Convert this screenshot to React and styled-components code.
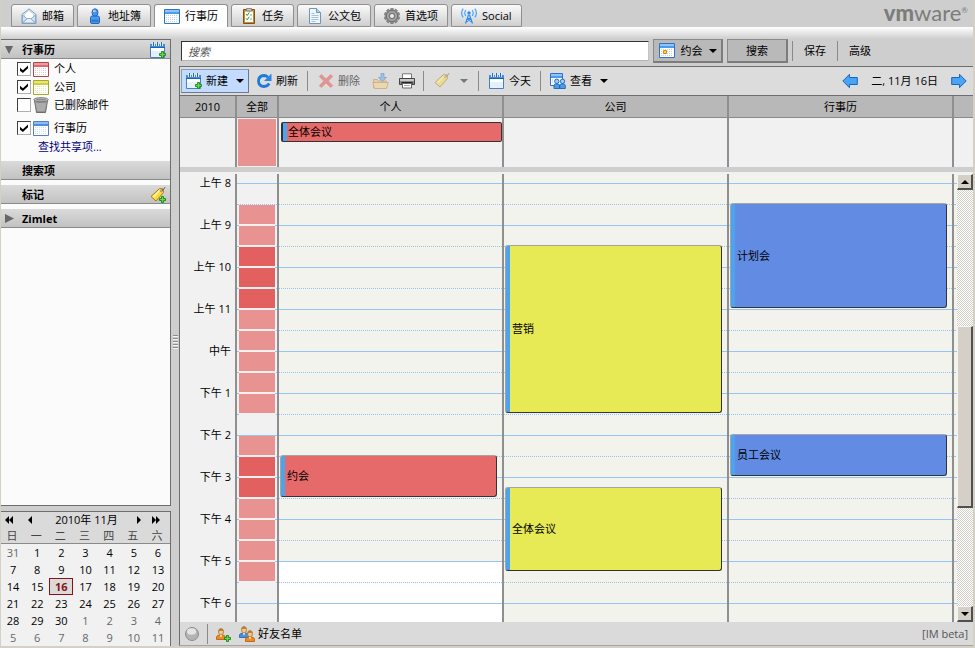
import React from "react";
import styled, { createGlobalStyle, css } from "styled-components";

const GlobalStyle = createGlobalStyle`
  *, *::before, *::after { box-sizing: border-box; }
  body {
    margin: 0;
    background: #cecece;
    color: #000;
    font-family: "Open Sans", "Noto Sans CJK SC", sans-serif;
    font-size: 11px;
    line-height: 16px;
  }
  button, input { font: inherit; color: inherit; }
`;

/* ---------- icons ---------- */

const Svg = styled.svg`
  display: block;
  flex: none;
  width: ${(p) => p.$w || 16}px;
  height: ${(p) => p.$h || 16}px;
  opacity: ${(p) => (p.$faded ? 0.5 : 1)};
`;

function Icon({ w = 16, h = 16, faded, children }) {
  return (
    <Svg $w={w} $h={h} $faded={faded} viewBox={`0 0 ${w} ${h}`} aria-hidden="true">
      {children}
    </Svg>
  );
}

const MailIcon = () => (
  <Icon>
    <path d="M1 6.500 8 .8l7 5.700v9H1z" fill="#dbe9f6" stroke="#7f9fc0" />
    <path d="M3.500 6 8 2.500 12.500 6v4.500h-9z" fill="#fff" stroke="#b4cbe0" strokeWidth=".7" />
    <path d="m1.500 7 4.700 4L1.500 15zM14.500 7l-4.700 4 4.700 4z" fill="#cfe2f4" stroke="#7f9fc0" strokeWidth=".8" />
    <path d="m1.500 15 5-4.500h3l5 4.500z" fill="#e3effa" stroke="#7f9fc0" strokeWidth=".8" />
  </Icon>
);

const PersonIcon = () => (
  <Icon>
    <path d="M3.500 9.500Q3.500 8 5.500 8h5q2 0 2 1.500V14q0 1.500-1.500 1.500H5q-1.500 0-1.500-1.500z" fill="#4b9bea" stroke="#1f67c0" />
    <path d="M4.500 11.500h7V14h-7z" fill="#2d7bd8" />
    <ellipse cx="8" cy="4.500" rx="3" ry="3.700" fill="#4596e8" stroke="#1f67c0" />
    <ellipse cx="7.300" cy="3" rx="1.500" ry="1.300" fill="#a2cdf8" />
  </Icon>
);

function GridCalendarIcon({ dark = "#2e72c4", head = "#4d9bee", light = "#8dc4fa", dot = "#c2cfe6", mark }) {
  const dots = [];
  for (let x = 2; x < 14; x += 2) for (let y = 6; y < 13; y += 2) dots.push([x, y]);
  return (
    <Icon h={15}>
      <path d="M.5.5h15v14H.5z" fill="#fff" stroke={dark} />
      <path d="M1 1h14v2H1z" fill={light} />
      <path d="M1 3h14v2H1z" fill={head} />
      {dots.map(([x, y]) => (
        <path key={`${x}-${y}`} d={`M${x} ${y}h1v1h-1z`} fill={dot} />
      ))}
      {mark && <path d="M4.500 7.500h3v3h-3z" fill="#ffd83c" stroke="#d88a10" />}
    </Icon>
  );
}

function PadCalendarIcon({ plus }) {
  return (
    <Icon>
      <path d="M.5 2.500h14v13H.5z" fill="#e6f0fb" stroke="#4a7fc0" />
      <path d="M0 2h15v4H0z" fill="#3f8ee4" />
      <path d="M0 5h15v1H0z" fill="#1f62b4" />
      <path d="M1 6h13v3H1z" fill="#fff" />
      <path d="M2 0h3v4H2zM6 0h3v4H6zM10 0h3v4h-3z" fill="#dbe9f8" />
      <path d="M3 0h1v4H3zM7 0h1v4H7zM11 0h1v4h-1z" fill="#2a67b0" />
      {plus && <PlusMark x={9} y={9} />}
    </Icon>
  );
}

const PlusMark = ({ x, y }) => (
  <path
    transform={`translate(${x} ${y})`}
    d="M2.500.5h2v2h2v2h-2v2h-2v-2h-2v-2h2z"
    fill="#63dc3e"
    stroke="#16861d"
    strokeWidth=".9"
  />
);

const TaskIcon = () => (
  <Icon>
    <path d="M2.500 1.500h11v14h-11z" fill="#c48a2c" stroke="#7d5314" />
    <path d="M4 3.500h8V14H4z" fill="#fdfdfd" />
    <path d="M5.500.5h5v2.500h-5z" fill="#c9c9c9" stroke="#777" strokeWidth=".8" />
    <path d="m5 6 1.200 1.500 2-3M5 10.300l1.200 1.500 2-3" fill="none" stroke="#2a9a2a" />
    <path d="M9 7h2M9 11h2" stroke="#9a9a9a" />
  </Icon>
);

const DocumentIcon = () => (
  <Icon>
    <path d="M2.500.5h7l4 4v11h-11z" fill="#f1f7fd" stroke="#6d95bd" />
    <path d="M9.500.5v4h4" fill="#b9d2ea" stroke="#6d95bd" />
    <path d="M4.500 5.500h3M4.500 7.500h7M4.500 9.500h7M4.500 11.500h7M4.500 13.500h4" stroke="#a4c1dd" />
  </Icon>
);

const GearIcon = () => (
  <Icon>
    <g fill="#8d8d8d" stroke="#5c5c5c" strokeWidth=".5">
      {[0, 36, 72, 108, 144].map((a) => (
        <rect key={a} x="6.600" y=".3" width="2.800" height="15.400" rx=".6" transform={`rotate(${a} 8 8)`} />
      ))}
    </g>
    <circle cx="8" cy="8" r="5.600" fill="#a5a5a5" stroke="#666" strokeWidth=".8" />
    <circle cx="8" cy="8" r="3.200" fill="#777" />
    <circle cx="8" cy="8" r="2" fill="#ececec" />
  </Icon>
);

const AntennaIcon = () => (
  <Icon>
    <circle cx="8" cy="5" r="1.700" fill="#2a8cf0" />
    <path d="M7.500 7 4.500 15.500M8.500 7l3 8.500M6.500 10.500h3M5 14l5-3M11 14l-5-3" stroke="#2a8cf0" strokeWidth="1.200" fill="none" />
    <path d="M4.800 2q-2 3 0 6M11.200 2q2 3 0 6M2.200.7q-3.200 4.300 0 8.600M13.800.7q3.200 4.300 0 8.600" stroke="#4aa6f6" strokeWidth="1.200" fill="none" />
  </Icon>
);

const TrashIcon = () => (
  <Icon>
    <path d="M1.500 3.500h13L12.500 15.500h-9z" fill="#a9a9a9" stroke="#6c6c6c" />
    <path d="M4 5v10M6 5v10M8 5v10M10 5v10M12 5v10" stroke="#6e6e6e" strokeWidth=".8" />
    <path d="M3 7h10M3 9h10M3.500 11h9M4 13h8" stroke="#dedede" strokeWidth=".7" />
    <ellipse cx="8" cy="2.700" rx="7.300" ry="2" fill="#c9c9c9" stroke="#777" />
    <ellipse cx="8" cy="2.700" rx="5" ry=".9" fill="#8b8b8b" />
  </Icon>
);

function TagIcon({ plus, faded }) {
  return (
    <Icon faded={faded}>
      <path d="M1 9.500 9.500 1.500l3.500.500.500 3.500L6 14z" fill="#ffd940" stroke="#a87c10" />
      <path d="m2.500 9.300 7.300-6.800h1.700l-7.500 8.300z" fill="#fff2a4" />
      <circle cx="11.300" cy="3.700" r="1.100" fill="#fff" stroke="#8a6a1c" strokeWidth=".7" />
      <path d="M11.500 3.700q2-.5 3.500-3.500" fill="none" stroke="#555" />
      {plus && <PlusMark x={9} y={9} />}
    </Icon>
  );
}

const RefreshIcon = () => (
  <Icon>
    <path d="M12 4.200Q10.300 2.500 8 2.500 2.500 2.800 2.500 8.200 2.800 13.500 8 13.500q3.500-.2 5.200-3" fill="none" stroke="#1f78dc" strokeWidth="2.800" />
    <path d="M15.500.5v7.500H8z" fill="#2b86e8" />
  </Icon>
);

const DeleteIcon = () => (
  <Icon faded>
    <path d="m3.300 1.500 4.700 4.500 4.700-4.500 2 2L10.200 8l4.500 4.500-2 2L8 10l-4.700 4.500-2-2L5.800 8 1.300 3.500z" fill="#e8504c" stroke="#d8403c" strokeWidth=".7" />
  </Icon>
);

const MoveIcon = () => (
  <Icon w={17} faded>
    <path d="M1.500 6.500h4l1 1.500h8v7h-13z" fill="#f0c272" stroke="#b98a44" />
    <path d="M.8 9.500h15.400l-1.700 6H2.500z" fill="#fbd488" stroke="#c08c38" />
    <path d="M9 .5h3v4h2.500l-4 4-4-4H9z" fill="#5fa8ee" stroke="#2f6fb4" strokeWidth=".8" />
  </Icon>
);

const PrintIcon = () => (
  <Icon>
    <path d="M3.500.8h9V6h-9z" fill="#fff" stroke="#777" />
    <path d="M.5 5.500h15v6H.5z" fill="#8a8a8a" stroke="#444" />
    <path d="M1 6h14v2H1z" fill="#c8c8c8" />
    <path d="M2.500 9h11v2h-11z" fill="#222" />
    <path d="M3.500 10.500h9V15h-9z" fill="#fff" stroke="#666" />
    <path d="M5 12.500h6" stroke="#aaa" />
  </Icon>
);

const TeamViewIcon = () => (
  <Icon>
    <path d="M.5.5h12v12H.5z" fill="#fff" stroke="#2e72c4" />
    <path d="M1 1h11v2H1z" fill="#8dc4fa" />
    <path d="M1 3h11v2H1z" fill="#4d9bee" />
    <path d="M2 7h1M2 9h1" stroke="#b4c8ea" />
    <circle cx="6.800" cy="8.300" r="2.200" fill="#9ccbfa" stroke="#1e62b8" strokeWidth=".9" />
    <circle cx="12.500" cy="8.300" r="2.200" fill="#9ccbfa" stroke="#1e62b8" strokeWidth=".9" />
    <path d="M4 15.500v-3q0-1.700 2.800-1.700 2.800 0 2.800 1.700v3zM9.700 15.500v-3q0-1.700 2.800-1.700 2.800 0 2.800 1.700v3z" fill="#4d9bee" stroke="#1e62b8" strokeWidth=".9" />
  </Icon>
);

function NavArrowIcon({ right }) {
  return (
    <Icon>
      <path
        transform={right ? "translate(16 0) scale(-1 1)" : undefined}
        d="M.8 8 7.500 1.300v3.200h7.800v7H7.500v3.200z"
        fill="#4aa3f5"
        stroke="#1a66ba"
      />
    </Icon>
  );
}

function DownArrow({ color = "#000" }) {
  return (
    <Icon w={8} h={4}>
      <path d="M0 0h8L4 4z" fill={color} />
    </Icon>
  );
}

const CalArrow = ({ right, double }) => (
  <Icon w={10} h={8}>
    <g transform={right ? "translate(10 0) scale(-1 1)" : undefined}>
      <path d={double ? "M5 0v8L1 4zM9 0v8L5 4z" : "M7 0v8L3 4z"} />
    </g>
  </Icon>
);

const Bust = ({ x, y, coat, edge }) => (
  <g transform={`translate(${x} ${y})`}>
    <path d="M.5 11.500V9Q.5 7 5 7t4.500 2v2.500z" fill={coat} stroke={edge} strokeWidth=".8" />
    <path d="M3.700 7h2.600L5 9.500z" fill="#fff" />
    <ellipse cx="5" cy="3.800" rx="2.500" ry="3.200" fill="#f4c98e" stroke="#a8702c" strokeWidth=".8" />
    <path d="M2.500 3.500Q2.800.5 5 .5t2.500 3Q6 2 2.500 3.500" fill="#b97a35" />
  </g>
);

const AddBuddyIcon = () => (
  <Icon>
    <Bust x={1} y={2} coat="#f08a1c" edge="#b25a08" />
    <PlusMark x={9} y={9} />
  </Icon>
);

const BuddiesIcon = () => (
  <Icon>
    <Bust x={0} y={0} coat="#4b8fdc" edge="#2460a8" />
    <Bust x={6} y={4} coat="#f08a1c" edge="#b25a08" />
  </Icon>
);

const PresenceIcon = () => (
  <Icon>
    <circle cx="8" cy="8" r="6.500" fill="#b4b4b4" stroke="#8c8c8c" />
    <ellipse cx="7.500" cy="5.500" rx="4.500" ry="3.300" fill="#e4e4e4" />
  </Icon>
);

/* ---------- frame ---------- */

const Frame = styled.div`
  display: flex;
  flex-direction: column;
  height: 100vh;
  min-height: 600px;
  border: solid #d4d0c8;
  border-width: 0 2px 2px 1px;
`;

const TopBar = styled.header`
  display: flex;
  justify-content: space-between;
  height: 27px;
  padding: 0 5px 0 10px;
`;

const Tabs = styled.nav`
  display: flex;
  gap: 3px;
  padding-top: 4px;
`;

const Tab = styled.button`
  display: flex;
  align-items: center;
  gap: 5px;
  padding: 0 9px;
  border: 1px solid #8f8f8f;
  border-bottom-width: ${(p) => (p.$active ? 0 : 1)}px;
  border-radius: 3px 3px 0 0;
  background: ${(p) => (p.$active ? "#fff" : "linear-gradient(#fafafa, #cfcfcf)")};
`;

const Logo = styled.div`
  color: #7c7c7c;
  font-family: Lato, sans-serif;
  font-size: 22px;
  line-height: 26px;

  b { font-weight: 900; }
  small { font-size: 8px; vertical-align: 8px; line-height: 8px; }
`;

const Sheen = styled.div`
  height: 12px;
  flex: none;
  background: linear-gradient(#fff, #cecece);
`;

const Body = styled.div`
  display: grid;
  grid-template-columns: 170px 8px minmax(0, 1fr);
  flex: 1;
  min-height: 0;
`;

const Sash = styled.div`
  display: flex;
  align-items: center;
  justify-content: center;

  &::before {
    content: "";
    width: 5px;
    height: 15px;
    background: repeating-linear-gradient(#8c8c8c 0 1px, #f4f4f4 1px 2px, #cecece 2px 3px);
  }
`;

/* ---------- sidebar ---------- */

const Sidebar = styled.aside`
  display: flex;
  flex-direction: column;
  gap: 5px;
  min-height: 0;
`;

const Overview = styled.div`
  flex: 1;
  min-height: 0;
  overflow: hidden;
  border: solid #6e6e6e;
  border-width: 1px 1px 1px 0;
  background: #fbfbfb;
`;

const SectionHeader = styled.h2`
  display: grid;
  grid-template-columns: 13px 1fr 16px;
  gap: 4px;
  align-items: center;
  height: 19px;
  margin: 0 0 ${(p) => p.$gap || 5}px;
  padding: 1px 4px 0;
  border-bottom: 1px solid #8a8a8a;
  background: linear-gradient(#dadada, #c2c2c2);
  font-size: 11px;
  font-weight: 700;
`;

const Twisty = styled.button`
  width: 9px;
  height: 9px;
  padding: 0;
  border: 0;
  background: #666;
  clip-path: ${(p) => (p.$open ? "polygon(0 10%, 90% 10%, 45% 100%)" : "polygon(0 0, 100% 50%, 0 100%)")};
`;

const FolderList = styled.ul`
  margin: 0;
  padding: 0 0 5px 16px;
  list-style: none;
`;

const FolderRow = styled.li`
  height: 18px;
  margin-top: ${(p) => (p.$spaced ? 5 : 0)}px;

  label {
    display: flex;
    align-items: center;
    height: 18px;
  }

  span { margin-left: 5px; }
`;

const CheckBox = styled.input`
  appearance: none;
  flex: none;
  width: 14px;
  height: 14px;
  margin: 0 2px 0 0;
  border: 1px solid #404040;
  border-right-color: #b0b0b0;
  border-bottom-color: #b0b0b0;
  background: #fff;

  &:checked::after {
    content: "";
    display: block;
    width: 8px;
    height: 8px;
    margin: 2px;
    background: #000;
    clip-path: polygon(0 35%, 36% 65%, 100% 5%, 100% 42%, 36% 100%, 0 72%);
  }
`;

const ShareLink = styled.a`
  display: block;
  height: 19px;
  padding: 2px 0 0 21px;
  color: #00007c;
  text-decoration: none;
`;

/* ---------- month picker ---------- */

const MonthPicker = styled.section`
  border: solid #6e6e6e;
  border-width: 1px 1px 0 0;
  background: #f1f1f1;
`;

const MonthNav = styled.div`
  display: grid;
  grid-template-columns: 16px 26px 1fr 18px 16px;
  align-items: center;
  height: 16px;
  padding-right: 6px;
  background: #dadada;
  text-align: center;

  button {
    display: flex;
    justify-content: center;
    padding: 0;
    border: 0;
    background: none;
  }
`;

const MonthTable = styled.table`
  width: 100%;
  border-collapse: separate;
  border-spacing: 0;
  table-layout: fixed;
  text-align: center;

  th {
    height: 16px;
    padding: 0 2px 0 0;
    border-bottom: 1px solid #8a8a8a;
    background: #dadada;
    color: #444;
    font-weight: 400;
    line-height: 15px;
  }
`;

const DayCell = styled.td`
  height: 17px;
  padding: 0;
  color: ${(p) => (p.$muted ? "#666" : "#000")};
  line-height: 17px;
  ${(p) =>
    p.$today &&
    css`
      border: 1px solid #8c1014;
      background: #dadada;
      color: #8c1014;
      font-weight: 700;
      line-height: 15px;
    `}
`;

/* ---------- main area ---------- */

const Main = styled.main`
  display: flex;
  flex-direction: column;
  min-width: 0;
  min-height: 0;
`;

const SearchBar = styled.form`
  display: flex;
  align-items: center;
  flex: none;
  height: 27px;
  padding: 0 91px 3px 2px;
`;

const SearchInput = styled.input`
  flex: 1;
  min-width: 0;
  height: 20px;
  margin-right: 4px;
  padding: 0 6px;
  border: 1px solid #333;
  border-right-color: #c4c4c4;
  border-bottom-color: #b4b4b4;
  background: #fff;
  font-style: italic;

  &::placeholder { color: #555; opacity: 1; }
`;

const RaisedButton = styled.button`
  display: flex;
  align-items: center;
  justify-content: center;
  gap: 6px;
  width: ${(p) => p.$width}px;
  height: 24px;
  margin-right: 4px;
  padding: 0;
  border: solid;
  border-width: 1px 2px 2px 1px;
  border-color: #8a8a8a #7c7c7c #7c7c7c #8a8a8a;
  background: #b9b9b9;
`;

const PlainButton = styled.button`
  width: 44px;
  padding: 0;
  border: 0;
  background: none;
`;

const Divider = styled.i`
  flex: none;
  width: 1px;
  height: 20px;
  margin: 0 ${(p) => p.$after || 0}px 0 ${(p) => p.$before || 0}px;
  background: #8a8a8a;
`;

const Panel = styled.div`
  display: flex;
  flex-direction: column;
  flex: 1;
  min-height: 0;
  border: solid #6e6e6e;
  border-width: 1px 0 1px 1px;
  border-bottom-color: #a4a4a4;
  background: #cecece;
`;

const Toolbar = styled.div`
  display: flex;
  align-items: center;
  flex: none;
  height: 29px;
  padding: 0 1px;
  border-bottom: 1px solid #6e6e6e;
  background: #dcdcdc;
`;

const ToolButton = styled.button`
  display: flex;
  align-items: center;
  gap: 4px;
  height: 24px;
  padding: 0 ${(p) => (p.$tight ? 5 : 7)}px;
  border: 0;
  background: none;

  &:disabled { color: #666; }
  svg + svg { margin-left: 6px; }
  span + svg { margin-left: 4px; }

  ${(p) =>
    p.$primary &&
    css`
      padding: 0 4px;
      border: 1px solid #8a9bb4;
      border-right-color: #6b7a92;
      border-bottom-color: #6b7a92;
      background: #c3dbff;
    `}
`;

const DateLabel = styled.div`
  margin: 0 8px;
`;

const Push = styled.div`
  flex: 1;
`;

/* ---------- schedule ---------- */

const scheduleColumns = css`
  display: grid;
  grid-template-columns: 57px 42px repeat(3, minmax(0, 1fr)) 19px;
`;

const ColumnHeads = styled.div`
  ${scheduleColumns}
  flex: none;
  height: 22px;
  border-bottom: 1px solid #8a8a8a;
  background: #b8b8b8;
  line-height: 22px;
  text-align: center;

  div:not(:last-child) { border-right: 2px solid #8f8f8f; }
`;

const AllDayArea = styled.div`
  ${scheduleColumns}
  flex: none;
  height: 49px;
  margin-bottom: 5px;
  background: #f1f1f1;
`;

const AllDayCell = styled.div`
  padding: ${(p) => (p.$busy ? "1px" : "4px 0 0 2px")};
  border-right: 2px solid #8f8f8f;
`;

const AllDayBusy = styled.div`
  height: 47px;
  background: #e89292;
`;

const AllDayEvent = styled.button`
  display: block;
  width: 100%;
  height: 20px;
  padding: 0 2px;
  border: solid #333;
  border-width: 1px 1px 1px 2px;
  border-radius: 2px;
  background: linear-gradient(90deg, #4ba4ef 4px, #e76a6a 4px);
  line-height: 18px;
  text-align: left;
  text-indent: 3px;
`;

const TimeArea = styled.div`
  display: grid;
  grid-template-columns: minmax(0, 1fr) 16px;
  flex: 1;
  min-height: 0;
  padding-top: 2px;
  background: #f1f1f1;
`;

const TimeGrid = styled.div`
  display: grid;
  grid-template-columns: 57px 42px repeat(3, minmax(0, 1fr)) 3px;
  min-height: 0;
  overflow: hidden;
`;

const Column = styled.div`
  position: relative;
  min-height: 0;
  overflow: hidden;
  border-right: ${(p) => (p.$last ? 0 : 2)}px solid #8f8f8f;
`;

const HourLabel = styled.div`
  height: 42px;
  padding-right: 4px;
  line-height: 18px;
  text-align: right;
  white-space: nowrap;
`;

const slotTone = { work: "#f2f3ec", off: "#fff", none: "#f1f1f1" };

const Slot = styled.div`
  height: 21px;
  padding: 0 2px;
  border-bottom: 1px ${(p) => (p.$hour ? "solid" : "dotted")} #93c5f7;
  background: ${(p) => slotTone[p.$tone]};

  &:first-child { height: 10px; }
`;

const Busy = styled.div`
  height: 21px;
  border-bottom: 2px solid #f1f1f1;
  background: ${(p) => (p.$level > 1 ? "#e26060" : "#e89292")};
`;

const Appointment = styled.button`
  position: absolute;
  top: ${(p) => p.$top}px;
  right: 5px;
  left: 1px;
  height: ${(p) => p.$height}px;
  padding: 0 6px;
  border: 1px solid #333;
  border-top-color: #a4a4a4;
  border-left-color: #a4a4a4;
  border-radius: 3px;
  background: linear-gradient(90deg, #4ba4ef 4px, ${(p) => p.$color} 4px);
  text-align: left;
`;

/* ---------- scroll bar ---------- */

const ScrollBar = styled.div`
  display: grid;
  grid-template-rows: 16px 136fr 182fr 98fr 16px;
  background: repeating-conic-gradient(#d4d0c8 0 25%, #fff 0 50%) 0 0 / 2px 2px;
`;

const raised = css`
  border: solid;
  border-width: 1px 2px 2px 1px;
  border-color: #f6f4f0 #505050 #505050 #f6f4f0;
  background: #d4d0c8;
`;

const ScrollButton = styled.button`
  ${raised}
  display: flex;
  align-items: center;
  justify-content: center;
  grid-row: ${(p) => (p.$up ? 1 : 5)};
  padding: 0;

  svg { transform: ${(p) => (p.$up ? "rotate(180deg)" : "none")}; }
`;

const ScrollThumb = styled.div`
  ${raised}
  grid-row: 3;
`;

/* ---------- status bar ---------- */

const StatusBar = styled.footer`
  display: flex;
  align-items: center;
  flex: none;
  height: 23px;
  padding: 0 5px 0 4px;
  background: #dadada;
`;

const StatusButton = styled.button`
  display: flex;
  align-items: center;
  gap: 3px;
  margin-right: ${(p) => p.$after || 0}px;
  padding: 0;
  border: 0;
  background: none;
`;

const ImNote = styled.span`
  margin-left: auto;
  color: #555;
`;

/* ---------- data ---------- */

const tabs = [
  ["邮箱", MailIcon],
  ["地址簿", PersonIcon],
  ["行事历", GridCalendarIcon],
  ["任务", TaskIcon],
  ["公文包", DocumentIcon],
  ["首选项", GearIcon],
  ["Social", AntennaIcon],
];

const redCal = { dark: "#b8434b", head: "#dc6a72", light: "#f09aa0", dot: "#f2c4c8" };
const yellowCal = { dark: "#a8a82c", head: "#d0d03c", light: "#e8e870", dot: "#e8e8a8" };
const paleCal = { dark: "#5a7fb8", head: "#4d8fe0", light: "#8dbcf4", dot: "#d4dcf0" };

const folders = [
  { name: "个人", checked: true, icon: <GridCalendarIcon {...redCal} /> },
  { name: "公司", checked: true, icon: <GridCalendarIcon {...yellowCal} /> },
  { name: "已删除邮件", checked: false, icon: <TrashIcon /> },
  { name: "行事历", checked: true, icon: <GridCalendarIcon {...paleCal} />, spaced: true },
];

const weekdays = ["日", "一", "二", "三", "四", "五", "六"];

// Days from 31 October to 11 December 2010.
const weeks = Array.from({ length: 6 }, (_, w) =>
  Array.from({ length: 7 }, (_, d) => {
    const n = w * 7 + d;
    if (n === 0) return { day: 31, muted: true };
    return n <= 30 ? { day: n } : { day: n - 30, muted: true };
  })
);

const hours = ["上午 8", "上午 9", "上午 10", "上午 11", "中午", "下午 1", "下午 2", "下午 3", "下午 4", "下午 5", "下午 6"];

const busyLevels = [0, 0, 1, 1, 2, 2, 2, 1, 1, 1, 1, 1, 0, 1, 2, 2, 1, 1, 1, 1, 0, 0];
const slots = Array.from({ length: 22 }, (_, i) => i);

const calendars = [
  { name: "个人", closesAt: 19, color: "#e76a6a", items: [["约会", 281, 42]] },
  { name: "公司", color: "#e7ea55", items: [["营销", 71, 168], ["全体会议", 313, 84]] },
  { name: "行事历", color: "#628ce3", items: [["计划会", 29, 105], ["员工会议", 260, 42]] },
];

/* ---------- page ---------- */

function MonthView() {
  return (
    <MonthPicker>
      <MonthNav>
        <button aria-label="上一年"><CalArrow double /></button>
        <button aria-label="上个月"><CalArrow /></button>
        <span>2010年 11月</span>
        <button aria-label="下个月"><CalArrow right /></button>
        <button aria-label="下一年"><CalArrow right double /></button>
      </MonthNav>
      <MonthTable>
        <thead>
          <tr>{weekdays.map((d) => <th key={d} scope="col">{d}</th>)}</tr>
        </thead>
        <tbody>
          {weeks.map((week, i) => (
            <tr key={i}>
              {week.map(({ day, muted }) => (
                <DayCell key={day} $muted={muted} $today={day === 16}>{day}</DayCell>
              ))}
            </tr>
          ))}
        </tbody>
      </MonthTable>
    </MonthPicker>
  );
}

function SidePanel() {
  return (
    <Sidebar>
      <Overview>
        <SectionHeader $gap={1}>
          <Twisty $open aria-label="折叠" />
          行事历
          <PadCalendarIcon plus />
        </SectionHeader>
        <FolderList>
          {folders.map((f) => (
            <FolderRow key={f.name} $spaced={f.spaced}>
              <label>
                <CheckBox type="checkbox" defaultChecked={f.checked} />
                {f.icon}
                <span>{f.name}</span>
              </label>
            </FolderRow>
          ))}
          <li><ShareLink href="#share">查找共享项...</ShareLink></li>
        </FolderList>
        <SectionHeader><i />搜索项</SectionHeader>
        <SectionHeader><i />标记<TagIcon plus /></SectionHeader>
        <SectionHeader><Twisty aria-label="展开" />Zimlet</SectionHeader>
      </Overview>
      <MonthView />
    </Sidebar>
  );
}

function ActionBar() {
  return (
    <Toolbar>
      <ToolButton $primary><PadCalendarIcon plus /><span>新建</span><DownArrow /></ToolButton>
      <ToolButton><RefreshIcon /><span>刷新</span></ToolButton>
      <Divider $before={2} $after={3} />
      <ToolButton disabled><DeleteIcon /><span>删除</span></ToolButton>
      <ToolButton disabled $tight aria-label="移动"><MoveIcon /></ToolButton>
      <ToolButton $tight aria-label="打印"><PrintIcon /></ToolButton>
      <Divider $before={3} $after={3} />
      <ToolButton disabled aria-label="标记"><TagIcon faded /><DownArrow color="#777" /></ToolButton>
      <Divider $before={3} $after={3} />
      <ToolButton><PadCalendarIcon /><span>今天</span></ToolButton>
      <Divider $before={2} $after={2} />
      <ToolButton><TeamViewIcon /><span>查看</span><DownArrow /></ToolButton>
      <Push />
      <ToolButton $tight aria-label="前一天"><NavArrowIcon /></ToolButton>
      <DateLabel>二, 11月 16日</DateLabel>
      <ToolButton $tight aria-label="后一天"><NavArrowIcon right /></ToolButton>
    </Toolbar>
  );
}

function Schedule() {
  return (
    <>
      <ColumnHeads>
        <div>2010</div>
        <div>全部</div>
        {calendars.map((c) => <div key={c.name}>{c.name}</div>)}
        <div />
      </ColumnHeads>
      <AllDayArea>
        <AllDayCell />
        <AllDayCell $busy><AllDayBusy /></AllDayCell>
        <AllDayCell><AllDayEvent>全体会议</AllDayEvent></AllDayCell>
        <AllDayCell />
        <AllDayCell />
      </AllDayArea>
      <TimeArea>
        <TimeGrid>
          <Column>{hours.map((h) => <HourLabel key={h}>{h}</HourLabel>)}</Column>
          <Column>
            {slots.map((i) => (
              <Slot key={i} $hour={i % 2 === 0} $tone="none">
                {busyLevels[i] > 0 && <Busy $level={busyLevels[i]} />}
              </Slot>
            ))}
          </Column>
          {calendars.map((c) => (
            <Column key={c.name}>
              {slots.map((i) => (
                <Slot key={i} $hour={i % 2 === 0} $tone={i >= c.closesAt ? "off" : "work"} />
              ))}
              {c.items.map(([title, top, height]) => (
                <Appointment key={title} $top={top} $height={height} $color={c.color}>{title}</Appointment>
              ))}
            </Column>
          ))}
          <Column $last>
            {slots.map((i) => <Slot key={i} $hour={i % 2 === 0} $tone="work" />)}
          </Column>
        </TimeGrid>
        <ScrollBar>
          <ScrollButton $up aria-label="向上滚动"><DownArrow /></ScrollButton>
          <ScrollThumb />
          <ScrollButton aria-label="向下滚动"><DownArrow /></ScrollButton>
        </ScrollBar>
      </TimeArea>
    </>
  );
}

export default function App() {
  return (
    <>
      <GlobalStyle />
      <Frame>
        <TopBar>
          <Tabs>
            {tabs.map(([name, TabIcon]) => (
              <Tab key={name} $active={name === "行事历"}><TabIcon />{name}</Tab>
            ))}
          </Tabs>
          <Logo><b>vm</b>ware<small>®</small></Logo>
        </TopBar>
        <Sheen />
        <Body>
          <SidePanel />
          <Sash />
          <Main>
            <SearchBar>
              <SearchInput type="text" placeholder="搜索" aria-label="搜索" />
              <RaisedButton type="button" $width={70}>
                <GridCalendarIcon mark />约会<DownArrow />
              </RaisedButton>
              <RaisedButton type="submit" $width={61}>搜索</RaisedButton>
              <Divider />
              <PlainButton type="button">保存</PlainButton>
              <Divider />
              <PlainButton type="button">高级</PlainButton>
            </SearchBar>
            <Panel>
              <ActionBar />
              <Schedule />
              <StatusBar>
                <StatusButton $after={7} aria-label="状态"><PresenceIcon /></StatusButton>
                <Divider $after={7} />
                <StatusButton $after={8} aria-label="添加好友"><AddBuddyIcon /></StatusButton>
                <StatusButton><BuddiesIcon />好友名单</StatusButton>
                <ImNote>[IM beta]</ImNote>
              </StatusBar>
            </Panel>
          </Main>
        </Body>
      </Frame>
    </>
  );
}
